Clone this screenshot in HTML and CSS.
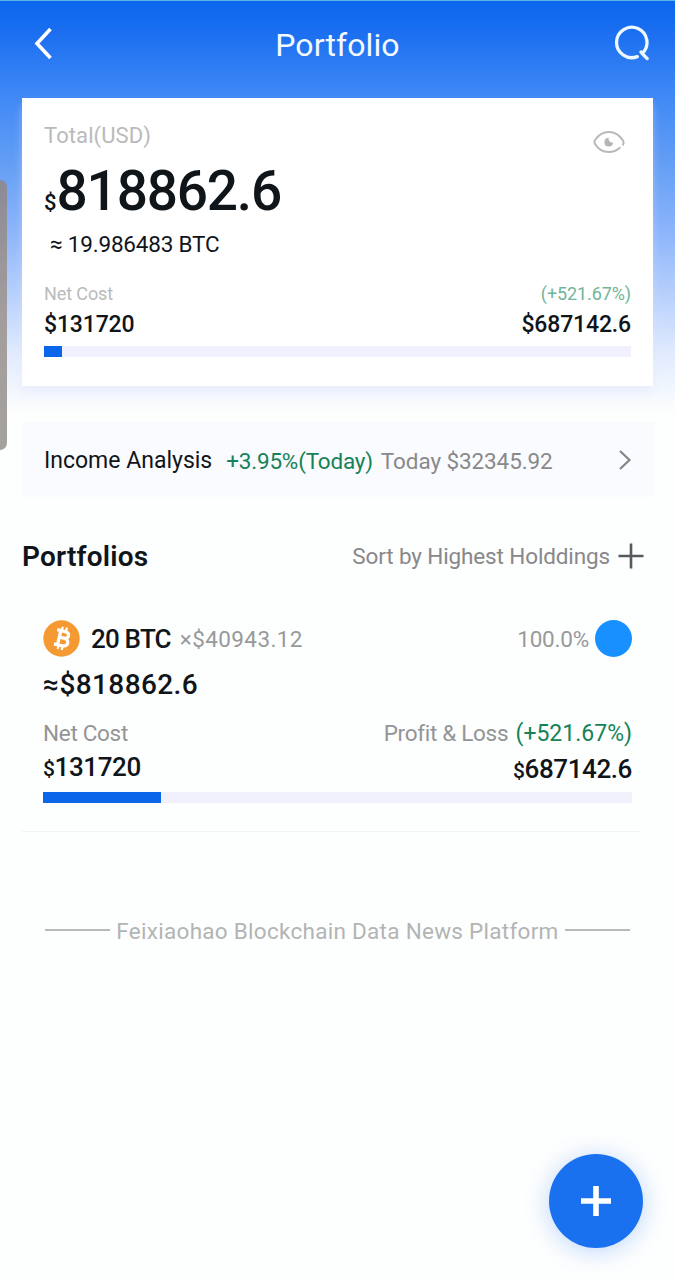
FILE: index.html
```
<!DOCTYPE html>
<html lang="en">
    <head>
        <title>Portfolio</title>
        <meta charset="UTF-8">
        <meta name="viewport" content="width=device-width, initial-scale=1">
        <link rel="stylesheet" href="styles.css">
    </head>
    <body>
        <div class="page">
            <header class="header">
                <svg class="back" width="24" height="36" viewBox="0 0 24 36">
                    <path d="M18.5 4 L5 18.5 L18.5 33" fill="none" stroke="#fff" stroke-width="3.6"/>
                </svg>
                <h1>Portfolio</h1>
                <svg class="search" width="38" height="38" viewBox="0 0 38 38">
                    <path d="M23.3 33.6 A15.2 15.2 0 1 1 28.2 30.5 L33.2 35.6 M28.2 30.5 L27 29" fill="none" stroke="#eef8ff" stroke-width="3.3" stroke-linecap="round" stroke-linejoin="round"/>
                </svg>
            </header>

            <section class="card">
                <div class="row total">
                    <span>Total(USD)</span>
                    <svg class="eye" width="32" height="24" viewBox="0 0 32 24">
                        <path d="M30 14.7 C30.8 13.2 30.8 11.7 29.8 10.2 C26.5 5 21.5 1.9 15.8 1.9 C9.8 1.9 5 5.2 1.9 10.3 C1.2 11.6 1.2 12.6 1.9 13.8 C5 19.1 10 22.1 15.8 22.1 C20 22.1 23.8 20.6 26.9 17.8" fill="none" stroke="#b9b9b9" stroke-width="2" stroke-linecap="round"/>
                        <path d="M15.6 7.8 A4.4 4.4 0 1 0 20.2 12.6 C17.5 13 15.2 11 15.6 7.8 Z" fill="#b5b5b5"/>
                    </svg>
                </div>
                <div class="amount"><small>$</small>818862.6</div>
                <div class="approx">≈ 19.986483 BTC</div>
                <div class="row labels">
                    <span>Net Cost</span>
                    <span class="rate">(+521.67%)</span>
                </div>
                <div class="row values">
                    <span>$131720</span>
                    <span>$687142.6</span>
                </div>
                <div class="bar"><i style="width: 3.1%"></i></div>
            </section>

            <section class="income">
                <span class="name">Income Analysis</span>
                <span class="green">+3.95%(Today)</span>
                <span class="today">Today $32345.92</span>
                <svg class="arrow" width="14" height="22" viewBox="0 0 14 22">
                    <path d="M2 2 L11.5 11 L2 20" fill="none" stroke="#858588" stroke-width="2.2"/>
                </svg>
            </section>

            <div class="title">
                <h2>Portfolios</h2>
                <span class="sort">Sort by Highest Holddings</span>
                <svg width="26" height="26" viewBox="0 0 26 26">
                    <path d="M13 0.5 V25.5 M0.5 13 H25.5" fill="none" stroke="#58595b" stroke-width="2.6"/>
                </svg>
            </div>

            <section class="coin">
                <div class="row head">
                    <svg class="btc" width="37" height="37" viewBox="0 0 37 37">
                        <circle cx="18.5" cy="18.5" r="18.2" fill="#f59a32"/>
                        <g transform="translate(0.6 -0.2) rotate(13 18.5 18.5)" fill="none" stroke="#fff">
                            <path d="M11.8 11.2 H20 C25.6 11.2 25.6 18 20 18 H15.5 M20 18 C26.8 18 26.8 25.8 20 25.8 H11.8 M15.5 11.2 V25.8" stroke-width="3.3"/>
                            <path d="M16.6 7 V11 M20.8 7 V11 M16.6 26 V30 M20.8 26 V30" stroke-width="2.2"/>
                        </g>
                    </svg>
                    <span class="count">20 BTC</span>
                    <span class="price">×$40943.12</span>
                    <span class="percent">100.0%</span>
                    <i class="dot"></i>
                </div>
                <div class="worth">≈$818862.6</div>
                <div class="row detail">
                    <div>
                        <div class="label">Net Cost</div>
                        <div class="money"><small>$</small>131720</div>
                    </div>
                    <div class="profit">
                        <div class="label">Profit &amp; Loss <span class="green">(+521.67%)</span></div>
                        <div class="money"><small>$</small>687142.6</div>
                    </div>
                </div>
                <div class="bar"><i style="width: 20%"></i></div>
            </section>

            <footer class="footer">Feixiaohao Blockchain Data News Platform</footer>

            <div class="scroll"></div>
            <div class="add">
                <svg width="30" height="30" viewBox="0 0 30 30">
                    <path d="M15 0 V30 M0 15 H30" fill="none" stroke="#fff" stroke-width="5.6"/>
                </svg>
            </div>
        </div>
    </body>
</html>
```
FILE: styles.css
```
*{
    margin: 0;
    padding: 0;
    box-sizing: border-box;
}
body {
    font-family: Roboto, "Liberation Sans", sans-serif;
    font-size: 22.5px;
    color: #10151a;
    background: #fdfefe;
}
.page {
    position: relative;
    height: 1280px;
    padding: 0 22px;
    overflow: hidden;
    white-space: nowrap;
    border-top: 1px solid #5db5e6;
    background: linear-gradient(#0a66ee 0, #1d70f0 35px, #3d87f6 90px, #659ff5 165px, #8fb6fb 235px, #b8d1fc 295px, #e2ecfe 355px, #fdfefe 412px) no-repeat;
}
.row {
    display: flex;
    justify-content: space-between;
}
.green {
    color: #158257;
}

/* header */
.header {
    display: flex;
    justify-content: space-between;
    height: 97px;
    padding: 24px 1px 0 10px;
}
.header h1 {
    font-size: 32px;
    font-weight: 400;
    line-height: 41px;
    letter-spacing: 0.1px;
    color: #f4faff;
    padding-left: 5px;
}
.search {
    margin-top: -2px;
}

/* total card */
.card {
    height: 288px;
    width: 631px;
    padding: 23px 22px 0;
    background: #fff;
    box-shadow: 0 7px 8px rgba(225, 231, 248, 0.4);
}
.total {
    font-size: 22px;
    line-height: 30px;
    height: 41px;
    letter-spacing: 0.1px;
    color: #b9babb;
}
.eye {
    margin: 9px 6px 0 0;
}
.amount {
    font-size: 55px;
    font-weight: 500;
    line-height: 58px;
    height: 58px;
    letter-spacing: -1.2px;
}
.amount small {
    font-size: 22px;
    letter-spacing: 0;
}
.approx {
    line-height: 30px;
    margin-top: 9px;
    padding-left: 6px;
    letter-spacing: -0.2px;
}
.labels {
    font-size: 18px;
    line-height: 24px;
    margin-top: 23px;
    letter-spacing: -0.1px;
    color: #b9babb;
}
.labels .rate {
    color: #71b598;
}
.values {
    font-size: 23px;
    font-weight: 500;
    line-height: 30px;
    margin-top: 4px;
    letter-spacing: -0.15px;
}
.bar {
    height: 11px;
    margin-top: 6px;
    background: #f0f1fc;
}
.bar i {
    display: block;
    height: 11px;
    background: #0b66e9;
}

/* income */
.income {
    display: flex;
    align-items: center;
    width: 632px;
    height: 75px;
    margin-top: 36px;
    padding: 2px 22px 0;
    background: #fafbfe;
}
.name {
    font-size: 23px;
}
.income .green {
    margin-left: 14px;
    letter-spacing: -0.2px;
}
.today {
    margin-left: 8px;
    letter-spacing: -0.1px;
    color: #88898b;
}
.arrow {
    margin: -2px 0 0 auto;
}

.title {
    display: flex;
    align-items: center;
    height: 30px;
    margin-top: 44px;
    padding-right: 9px;
}
.title h2 {
    font-size: 28px;
    font-weight: 600;
    letter-spacing: 0.2px;
}
.sort {
    margin: 0 8px 0 auto;
    letter-spacing: -0.13px;
    color: #87888a;
}

/* coin */
.coin {
    width: 619px;
    height: 261px;
    padding: 49px 9px 0 21px;
    border-bottom: 1px solid #f2f3f4;
}
.head {
    align-items: center;
    height: 37px;
}
.count {
    font-size: 26px;
    font-weight: 500;
    margin-left: 11px;
    letter-spacing: -0.8px;
}
.price {
    margin-left: 9px;
    letter-spacing: 0.4px;
    color: #98999b;
}
.percent {
    margin: 0 6px 0 auto;
    letter-spacing: -0.2px;
    color: #98999b;
}
.dot {
    width: 37px;
    height: 37px;
    border-radius: 50%;
    background: #1890ff;
}
.worth {
    font-size: 28px;
    font-weight: 500;
    line-height: 36px;
    margin-top: 10px;
    letter-spacing: 0.4px;
}
.detail {
    height: 79px;
    margin-top: 15px;
}
.label {
    line-height: 30px;
    letter-spacing: -0.3px;
    color: #939496;
}
.money {
    font-size: 26px;
    font-weight: 500;
    line-height: 32px;
    margin-top: 3px;
    letter-spacing: -0.4px;
}
.money small {
    font-size: 21px;
}
.profit {
    text-align: right;
}
.profit .green {
    margin-left: 2px;
    font-size: 23px;
    letter-spacing: 0;
}
.profit .money {
    margin-top: 4px;
}
.coin .bar {
    margin-top: -5px;
}

.footer {
    display: flex;
    align-items: center;
    justify-content: center;
    gap: 6px;
    height: 30px;
    margin-top: 84px;
    letter-spacing: 0.28px;
    color: #b3b4b4;
}
.footer::before,
.footer::after {
    content: "";
    width: 65px;
    height: 2px;
    margin-bottom: 2px;
    background: #b8bab9;
}

/* page overlays */
.scroll {
    position: absolute;
    top: 179px;
    left: 0;
    width: 7px;
    height: 270px;
    border-radius: 0 7px 7px 0;
    background: linear-gradient(#8c8a96, #a39e9c 50%, #a5a19e);
}
.add {
    position: absolute;
    top: 1153px;
    right: 32px;
    display: flex;
    align-items: center;
    justify-content: center;
    width: 94px;
    height: 94px;
    border-radius: 50%;
    background: #1a71ef;
    box-shadow: 0 3px 24px rgba(26, 113, 239, 0.28);
}
```
